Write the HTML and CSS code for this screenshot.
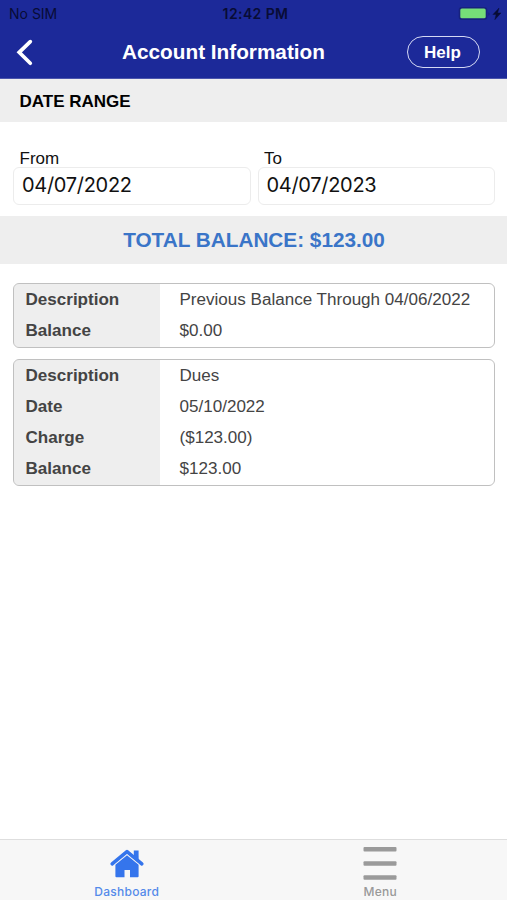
FILE: index.html
```html
<!DOCTYPE html>
<html lang="en">
<head>
<meta charset="utf-8">
<title>Account Information</title>
<link rel="stylesheet" href="styles.css">
</head>
<body>
<div class="app">
  <header class="header">
    <div class="status">
      <span class="carrier">No SIM</span>
      <span class="time">12:42 PM</span>
      <svg class="power" width="42" height="14" viewBox="0 0 42 14">
        <rect x="-0.5" y="0.7" width="27" height="11.4" rx="2.4" fill="#76df78" stroke="#17227d" stroke-width="1.6"/>
        <path d="M28.6 5q1.8 2 0 4z" fill="#141c68"/>
        <path d="M39 1 32.9 7.5h3.2l-1.3 5.2 6.2-6.8h-3.4z" fill="#080c35" stroke="#080c35" stroke-width="0.4"/>
      </svg>
    </div>
    <div class="navbar">
      <svg class="back" width="18" height="28" viewBox="0 0 18 28"><path d="M15.3 3.6 4.2 14.3l11.1 10.9" fill="none" stroke="#fff" stroke-width="3.7" stroke-linecap="round"/></svg>
      <h1 class="title">Account Information</h1>
      <a class="help">Help</a>
    </div>
  </header>
  <h2 class="section">DATE RANGE</h2>
  <div class="range">
    <label class="field">From<span class="input">04/07/2022</span></label>
    <label class="field">To<span class="input">04/07/2023</span></label>
  </div>
  <div class="total">TOTAL BALANCE: $123.00</div>
  <main class="records">
    <dl class="record">
      <dt>Description</dt><dd>Previous Balance Through 04/06/2022</dd>
      <dt>Balance</dt><dd>$0.00</dd>
    </dl>
    <dl class="record">
      <dt>Description</dt><dd>Dues</dd>
      <dt>Date</dt><dd>05/10/2022</dd>
      <dt>Charge</dt><dd>($123.00)</dd>
      <dt>Balance</dt><dd>$123.00</dd>
    </dl>
  </main>
  <nav class="tabs">
    <a class="tab active">
      <svg width="34" height="36" viewBox="0 0 34 36" fill="#3575ec">
        <path d="M17 14 28.6 23.5v11.8a1 1 0 0 1-1 1H20V29h-5.5v7.3H6.4a1 1 0 0 1-1-1V23.5z"/>
        <path d="M23.8 9.4h4.8v9.4l-4.8-3.9z"/>
        <path d="M2.2 22.8 17 10.7l14.8 12.1" fill="none" stroke="#3575ec" stroke-width="3.6" stroke-linecap="round" stroke-linejoin="round"/>
        <path d="M4.8 23.8 17 13.9l12.2 9.9" fill="none" stroke="#f7f7f7" stroke-width="0.6"/>
      </svg>
      <span>Dashboard</span>
    </a>
    <a class="tab">
      <svg width="34" height="36" viewBox="0 0 34 36" fill="#9a9a9a">
        <rect x="0.5" y="6.1" width="33" height="4.4" rx="1"/>
        <rect x="0.5" y="20.3" width="33" height="4.4" rx="1"/>
        <rect x="0.5" y="34.3" width="33" height="4.4" rx="1"/>
      </svg>
      <span>Menu</span>
    </a>
  </nav>
</div>
</body>
</html>
```
FILE: styles.css
```css
* { box-sizing: border-box; }
body {
  margin: 0;
  background: #fff;
  color: #111;
  font: 17px/20px "Liberation Sans", Arial, sans-serif;
}
.app { display: flex; flex-direction: column; height: 900px; overflow: hidden; }
h1, h2, dl, dd { margin: 0; }
.header {
  height: 79px;
  flex: none;
  background: #1c2999;
  border-bottom: 1px solid #4b55ac;
}
.status {
  display: grid;
  grid-template-columns: 1fr auto 1fr;
  align-items: center;
  height: 27px;
  padding: 0 5px 0 9px;
  color: #080c35;
  font: 14px/20px Inter, sans-serif;
}
.time { font-weight: 600; letter-spacing: 0.4px; }
.power { justify-self: end; overflow: visible; }
.navbar {
  display: grid;
  grid-template-columns: 46px 1fr 106px;
  align-items: center;
  height: 50px;
  color: #fff;
}
.back { margin-left: 15px; }
.title { font-size: 20.75px; line-height: 24px; text-align: center; white-space: nowrap; }
.help {
  justify-self: end;
  width: 73px;
  height: 32px;
  margin-right: 27px;
  border: 1.5px solid #d5d9f4;
  border-radius: 16px;
  font-weight: 700;
  line-height: 31px;
  text-align: center;
  text-indent: -2px;
}
.section {
  flex: none;
  height: 43px;
  padding-left: 19.5px;
  background: #eee;
  color: #000;
  font-size: 17px;
  line-height: 45px;
}
.range {
  display: grid;
  grid-template-columns: 1fr 1fr;
  gap: 7px;
  flex: none;
  height: 94px;
  padding: 27px 12px 0 13px;
}
.field { display: block; text-indent: 6.5px; }
.input {
  display: block;
  height: 38px;
  margin-top: -2px;
  padding-left: 8px;
  border: 1px solid #ececec;
  border-radius: 6px;
  background: #fff;
  font: 20px/35px Inter, sans-serif;
  letter-spacing: -0.3px;
  text-indent: 0;
}
.total {
  flex: none;
  height: 48px;
  background: #eee;
  color: #3a75c8;
  font-size: 20.75px;
  font-weight: 700;
  line-height: 48px;
  text-align: center;
  text-indent: 1px;
}
.records {
  display: flex;
  flex: 1;
  flex-direction: column;
  gap: 13px;
  padding: 20px 13px 0 14px;
  color: #444;
}
.record {
  display: grid;
  grid-template-columns: 146px 1fr;
  grid-auto-rows: 31.25px;
  height: max-content;
  overflow: hidden;
  outline: 1px solid #c0c0c0;
  outline-offset: -0.5px;
  border-radius: 5px;
  font-size: 17.06px;
  line-height: 31px;
}
.record dt { padding-left: 11.5px; background: #eee; font-weight: 700; }
.record dd { padding-left: 19.5px; white-space: nowrap; }
.tabs {
  display: grid;
  grid-template-columns: 1fr 1fr;
  flex: none;
  height: 61px;
  border-top: 1px solid #dedede;
  background: #f7f7f7;
  color: #999;
  font: 500 12px/15px Inter, sans-serif;
  letter-spacing: 0.25px;
}
.tab { display: flex; flex-direction: column; align-items: center; gap: 7px; padding-top: 1px; }
.tab svg { overflow: visible; }
.active { color: #548aea; }
```
